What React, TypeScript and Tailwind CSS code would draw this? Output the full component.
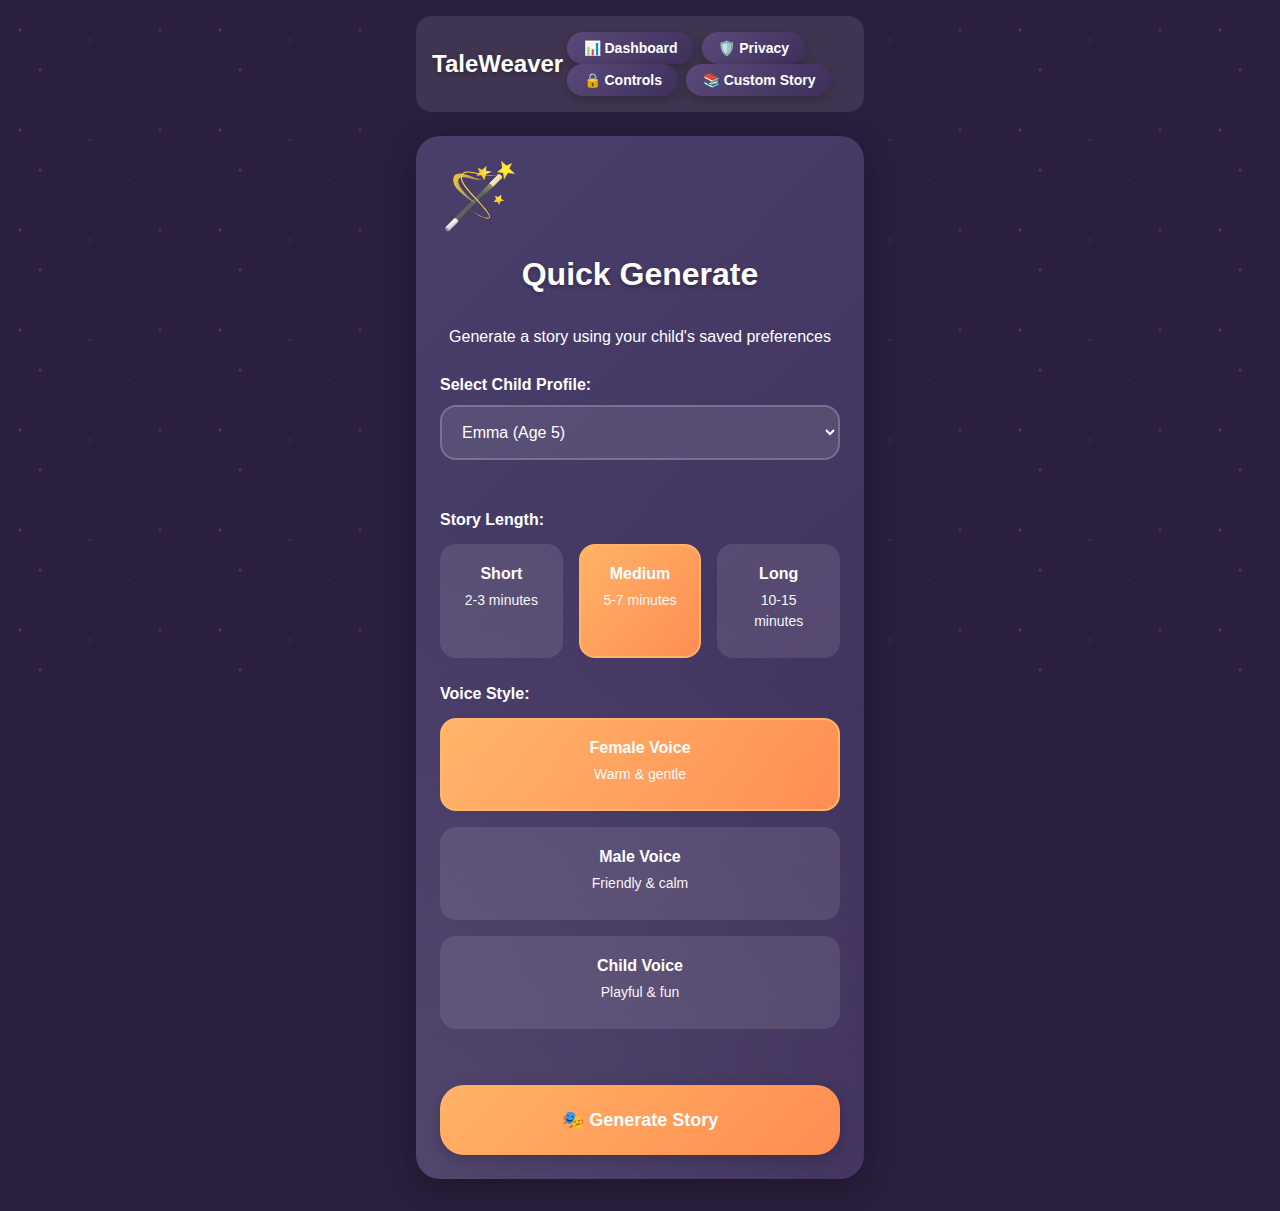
const navItems = ['📊 Dashboard', '🛡️ Privacy', '🔒 Controls', '📚 Custom Story'];

const lengths = [
  { title: 'Short', detail: '2-3 minutes' },
  { title: 'Medium', detail: '5-7 minutes', selected: true },
  { title: 'Long', detail: '10-15 minutes' },
];

const voices = [
  { title: 'Female Voice', detail: 'Warm & gentle', selected: true },
  { title: 'Male Voice', detail: 'Friendly & calm' },
  { title: 'Child Voice', detail: 'Playful & fun' },
];

type OptionProps = { title: string; detail: string; selected?: boolean };

function Option({ title, detail, selected }: OptionProps) {
  return (
    <button
      type="button"
      className={
        'flex flex-col items-center justify-start rounded-2xl border-2 p-4 text-center text-white ' +
        (selected
          ? 'border-[#ffb366] bg-[linear-gradient(135deg,#ffb366,#ff8c52)]'
          : 'border-transparent bg-white/10')
      }
    >
      <span className="text-base leading-6 font-bold">{title}</span>
      <span className="mt-1 mb-2 text-sm leading-[21px] opacity-95">{detail}</span>
    </button>
  );
}

function Stars() {
  return (
    <div className="pointer-events-none absolute inset-x-0 top-0 h-[720px] bg-[radial-gradient(2px_2px_at_20px_30px,#ffd700,transparent),radial-gradient(2px_2px_at_40px_70px,#ffb366,transparent),radial-gradient(1px_1px_at_90px_40px,#ffffff,transparent),radial-gradient(1px_1px_at_130px_80px,#4ecdc4,transparent),radial-gradient(2px_2px_at_160px_30px,#ff6b9d,transparent)] bg-[length:200px_100px] opacity-30" />
  );
}

export default function App() {
  return (
    <div className="relative min-h-[1211px] bg-[#2a1f3d] font-['Liberation_Sans',Arial,sans-serif] text-base leading-6 text-white">
      <Stars />
      <div className="relative mx-auto min-h-[1211px] w-[480px] bg-[#2a1f3d] p-4">
        <header className="mb-6 flex h-24 items-center gap-[4.1px] rounded-2xl bg-white/10 p-4">
          <h1 className="text-2xl font-bold [text-shadow:0_2px_4px_rgba(0,0,0,0.3)]">TaleWeaver</h1>
          <nav className="flex flex-1 flex-wrap gap-x-[8.45px]">
            {navItems.map((item) => (
              <a
                key={item}
                href="#"
                className="relative flex h-8 items-center rounded-[20px] bg-[linear-gradient(135deg,#5a4a7a,#3d2f5a)] pr-4 pl-[16.3px] text-sm font-bold whitespace-nowrap shadow-[0_4px_12px_rgba(0,0,0,0.2)]"
              >
                {item}
              </a>
            ))}
          </nav>
        </header>

        <main className="relative rounded-3xl bg-[linear-gradient(135deg,#4a3f6b,#3d2f5a)] p-6 shadow-[0_8px_32px_rgba(0,0,0,0.3)]">
          <div className="pointer-events-none absolute inset-0 rounded-3xl bg-[radial-gradient(circle_at_0%_100%,rgba(255,255,255,0.09),transparent_58%)]" />
          <div className="h-[90px] text-[64px] leading-[72px]">🪄</div>
          <h2 className="mb-[27px] text-center text-[32px] leading-12 font-bold [text-shadow:0_2px_4px_rgba(0,0,0,0.3)]">
            Quick Generate
          </h2>
          <p className="mb-6 text-center">Generate a story using your child's saved preferences</p>

          <label htmlFor="profile" className="mb-2 block font-bold">
            Select Child Profile:
          </label>
          <select
            id="profile"
            className="mb-12 block h-[55px] w-full rounded-2xl border-2 border-white/20 bg-white/10 p-4 text-base leading-normal text-white"
          >
            <option>Emma (Age 5)</option>
          </select>

          <h3 className="mb-3 font-bold">Story Length:</h3>
          <div className="mb-6 grid grid-cols-3 gap-4">
            {lengths.map((option) => (
              <Option key={option.title} {...option} />
            ))}
          </div>

          <h3 className="mb-3 font-bold">Voice Style:</h3>
          <div className="mb-14 grid gap-4">
            {voices.map((option) => (
              <Option key={option.title} {...option} />
            ))}
          </div>

          <button
            type="button"
            className="relative h-[70px] w-full rounded-3xl bg-[linear-gradient(135deg,#ffb366,#ff8c52)] pl-[0.5px] text-lg font-bold shadow-[0_4px_16px_rgba(0,0,0,0.2)]"
          >
            🎭 Generate Story
          </button>
        </main>
      </div>
    </div>
  );
}
